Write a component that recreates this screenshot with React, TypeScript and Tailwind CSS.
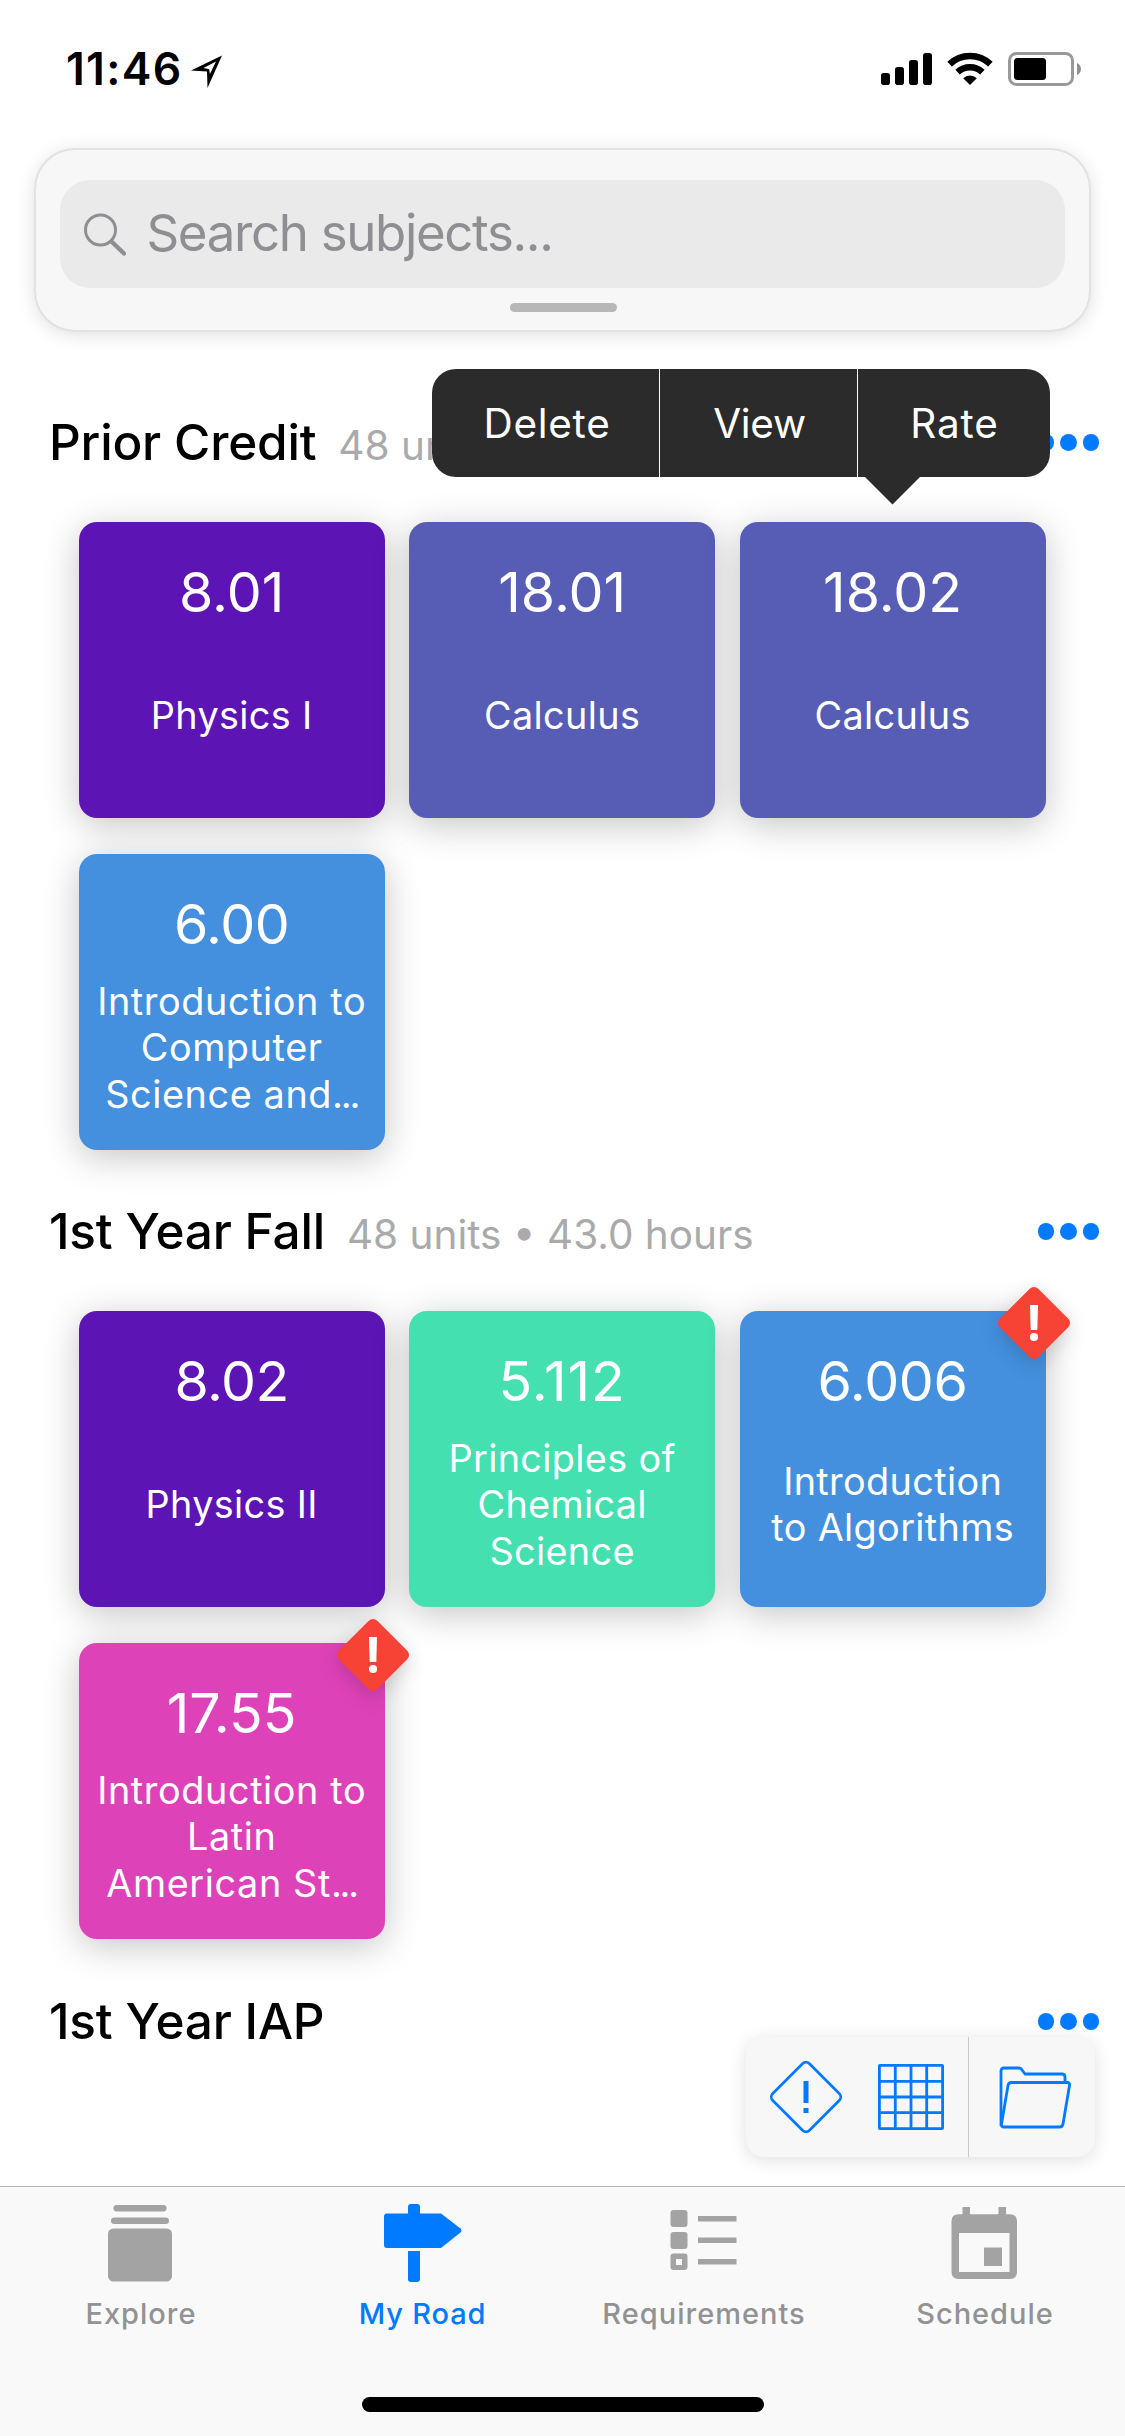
import type { ReactNode } from "react";

type Course = {
  id: string;
  lines: string[];
  truncated?: boolean;
  color: string;
  idTracking?: string;
  warning?: boolean;
};

type Semester = { name: string; info?: string; height: string; courses: Course[] };

const semesters: Semester[] = [
  {
    name: "Prior Credit",
    info: "48 units",
    height: "h-[789px]",
    courses: [
      { id: "8.01", lines: ["Physics I"], color: "bg-[#5c14b4]" },
      { id: "18.01", lines: ["Calculus"], color: "bg-[#575db4]" },
      { id: "18.02", lines: ["Calculus"], color: "bg-[#575db4]" },
      {
        id: "6.00",
        lines: ["Introduction to", "Computer", "Science and"],
        truncated: true,
        color: "bg-[#4490de]",
        idTracking: "tracking-[-0.5px]",
      },
    ],
  },
  {
    name: "1st Year Fall",
    info: "48 units • 43.0 hours",
    height: "h-[790px]",
    courses: [
      { id: "8.02", lines: ["Physics II"], color: "bg-[#5c14b4]", idTracking: "tracking-[-0.5px]" },
      {
        id: "5.112",
        lines: ["Principles of", "Chemical", "Science"],
        color: "bg-[#44e0b0]",
        idTracking: "tracking-[1px]",
      },
      {
        id: "6.006",
        lines: ["Introduction", "to Algorithms"],
        color: "bg-[#4490de]",
        idTracking: "tracking-[-0.3px]",
        warning: true,
      },
      {
        id: "17.55",
        lines: ["Introduction to", "Latin", "American St"],
        truncated: true,
        color: "bg-[#de42b8]",
        warning: true,
      },
    ],
  },
  { name: "1st Year IAP", height: "h-[789px]", courses: [] },
];

function StatusBar() {
  return (
    <div className="flex h-[150px] shrink-0 items-start justify-between pt-[49px] pr-[44px] pl-[66px]">
      <div className="flex items-start">
        <span className="text-[44.5px] leading-[40px] font-semibold tracking-[1.3px]">11:46</span>
        <svg className="mt-[6px] ml-[9px]" width="33" height="34" viewBox="0 0 33 34">
          <path
            d="M31 0.5 L0 15.5 L16 16.5 L16.5 33 Z M25 6.5 L18.9 19 L18.2 14.2 L12.5 13 Z"
            fill="#000"
            fillRule="evenodd"
          />
        </svg>
      </div>
      <div className="flex items-start pt-[3px]">
        <svg width="51" height="34" viewBox="0 0 51 34">
          <rect x="0" y="21" width="9" height="12" rx="2.8" />
          <rect x="14" y="15" width="9" height="18" rx="2.8" />
          <rect x="28" y="8" width="9" height="25" rx="2.8" />
          <rect x="42" y="1" width="9" height="32" rx="2.8" />
        </svg>
        <svg className="ml-[15px]" width="46" height="34" viewBox="0 0 46 34">
          <g fill="none" stroke="#000" strokeWidth="6.6">
            <path d="M2.6 12.2 A29.5 29.5 0 0 1 43.4 12.2" />
            <path d="M10.6 20.2 A18.2 18.2 0 0 1 35.4 20.2" />
          </g>
          <path d="M23 33 L16.2 26.2 A9.6 9.6 0 0 1 29.8 26.2 Z" />
        </svg>
        <svg className="ml-[15px]" width="73" height="34" viewBox="0 0 73 34">
          <rect x="1.5" y="1.5" width="63" height="31" rx="7" fill="none" stroke="#999" strokeWidth="3" />
          <rect x="6" y="6" width="32" height="22" rx="3.5" />
          <path d="M69 11 C74.3 13 74.3 21 69 23 Z" fill="#8f8f8f" />
        </svg>
      </div>
    </div>
  );
}

function SearchPanel() {
  return (
    <div className="mx-9 flex h-[180px] shrink-0 flex-col items-center rounded-[39px] bg-[#f7f7f7] px-6 pt-[30px] shadow-[0_0_0_2px_#e2e2e2,0_3px_20px_rgba(0,0,0,0.15)]">
      <div className="flex h-[108px] w-full items-center rounded-[30px] bg-[#eaeaea] pl-6">
        <svg width="42" height="43" viewBox="0 0 42 43" fill="none" stroke="#8e8e93" strokeLinecap="round">
          <circle cx="16.5" cy="17" r="15" strokeWidth="3" />
          <path d="M28 29 L40 40.5" strokeWidth="4.5" />
        </svg>
        <span className="mb-[3px] ml-[20.5px] text-[51px] leading-[60px] tracking-[-1.35px] text-[#8e8e93]">
          Search subjects...
        </span>
      </div>
      <div className="mt-[15px] ml-px h-[9px] w-[107px] rounded-full bg-[#b7b7b7]" />
    </div>
  );
}

function WarningBadge() {
  return (
    <svg
      className="absolute -top-[24px] -right-[24px] overflow-visible drop-shadow-[0_6px_10px_rgba(0,0,0,0.16)]"
      width="72"
      height="72"
      viewBox="0 0 72 72"
    >
      <rect x="8.75" y="8.75" width="54.5" height="54.5" rx="6" fill="#f74336" transform="rotate(45 36 36)" />
      <path d="M32 18 H40 L39.3 43 H32.7 Z" fill="#fff" />
      <circle cx="36" cy="50" r="4.1" fill="#fff" />
    </svg>
  );
}

function CourseCard({ course }: { course: Course }) {
  return (
    <div
      className={`relative flex h-[295.67px] flex-col items-center rounded-[18px] pt-10 pb-[9px] text-white shadow-[0_7px_36px_rgba(0,0,0,0.23)] ${course.color}`}
    >
      <div className={`text-[55.5px] leading-[60px] ${course.idTracking ?? ""}`}>{course.id}</div>
      <div
        className={`flex flex-1 flex-col justify-center text-center text-[37.8px] leading-[46.5px] whitespace-nowrap ${course.truncated ? "tracking-[0.6px]" : "tracking-[0.35px]"}`}
      >
        {course.lines.map((line, i) => (
          <div key={line}>
            {line}
            {course.truncated && i === course.lines.length - 1 && (
              <span className="tracking-[-2.2px]">...</span>
            )}
          </div>
        ))}
      </div>
      {course.warning && <WarningBadge />}
    </div>
  );
}

function MoreDots() {
  return (
    <div className="mt-[32px] flex gap-[6px]">
      <span className="size-[16.5px] rounded-full bg-[#007aff]" />
      <span className="size-[16.5px] rounded-full bg-[#007aff]" />
      <span className="size-[16.5px] rounded-full bg-[#007aff]" />
    </div>
  );
}

function SemesterSection({ semester, children }: { semester: Semester; children?: ReactNode }) {
  return (
    <section className={`relative shrink-0 ${semester.height}`}>
      <header className="flex h-[120px] items-start justify-between pr-[26px] pl-[49px]">
        <div className="flex items-baseline gap-[22px] pt-[10px]">
          <h2 className="text-[49.5px] leading-[60px] font-medium tracking-[-0.2px]">{semester.name}</h2>
          {semester.info && <span className="text-[40.5px] leading-[50px] text-[#aaa]">{semester.info}</span>}
        </div>
        <MoreDots />
      </header>
      <div className="ml-[78.67px] grid w-[967px] grid-cols-3 gap-x-[24.5px] gap-y-[36.33px]">
        {semester.courses.map((course) => (
          <CourseCard key={course.id} course={course} />
        ))}
      </div>
      {children}
    </section>
  );
}

function ContextMenu() {
  return (
    <div className="absolute top-[-33px] left-[432px] w-[618px]">
      <div className="flex h-[108px] items-center overflow-hidden rounded-[24px] bg-[#2b2b2b] text-[40.5px] text-white">
        <div className="flex h-full w-[228px] items-center justify-center border-r border-white pt-[2px] pl-[3px] tracking-[0.7px]">
          Delete
        </div>
        <div className="flex h-full w-[198px] items-center justify-center border-r border-white pt-[2px] pl-[2px] tracking-[-0.3px]">
          View
        </div>
        <div className="flex h-full flex-1 items-center justify-center pt-[2px] pl-[1px] tracking-[0.9px]">Rate</div>
      </div>
      <svg className="ml-[433px]" width="55" height="28" viewBox="0 0 55 28">
        <path d="M0 0 H55 L27.5 27.5 Z" fill="#2b2b2b" />
      </svg>
    </div>
  );
}

function FloatingToolbar() {
  return (
    <div className="absolute top-[2037px] left-[746px] flex h-[120px] w-[349px] rounded-[18px] bg-[#f7f7f7] shadow-[0_3px_18px_rgba(0,0,0,0.13)]">
      <div className="flex w-[223px] items-center border-r border-[#c8c8c8] pl-[24px]">
        <svg width="72" height="72" viewBox="0 0 72 72">
          <rect
            x="10"
            y="10"
            width="52"
            height="52"
            rx="5"
            fill="none"
            stroke="#007aff"
            strokeWidth="2.7"
            transform="rotate(45 36 36)"
          />
          <rect x="33.5" y="20" width="5" height="22" fill="#007aff" />
          <rect x="33.5" y="47" width="5" height="5" fill="#007aff" />
        </svg>
        <svg className="ml-[36px]" width="66" height="66" viewBox="0 0 66 66" fill="none" stroke="#007aff">
          <rect x="1.4" y="1.4" width="63.2" height="63.2" rx="0.5" strokeWidth="2.8" />
          <path
            d="M17.3 1 V65 M33 1 V65 M48.7 1 V65 M1 17.3 H65 M1 33 H65 M1 48.7 H65"
            strokeWidth="2.8"
          />
        </svg>
      </div>
      <div className="flex flex-1 items-center pt-[1px] pl-[29px]">
        <svg
          width="74"
          height="64"
          viewBox="0 0 74 64"
          fill="none"
          stroke="#007aff"
          strokeWidth="2.8"
          strokeLinejoin="round"
        >
          <path d="M3 60 V5 Q3 2 6 2 H21 Q23 2 24 4 L27 8 H64 Q67 8 67 11 V16" />
          <path d="M13.5 16.5 H69 Q72 16.5 71.5 19.5 L65 58 Q64.5 61 61.5 61 H6 Q3 61 3.5 58 L10 19.5 Q10.5 16.5 13.5 16.5 Z" />
        </svg>
      </div>
    </div>
  );
}

function ExploreIcon() {
  return (
    <svg width="90" height="90" viewBox="0 0 90 90" fill="#a3a3a3">
      <rect x="17.5" y="6" width="53" height="6.5" rx="3.2" />
      <rect x="15" y="18.5" width="58" height="6.5" rx="3.2" />
      <rect x="12" y="29.5" width="64" height="53" rx="5.5" />
    </svg>
  );
}

function RoadIcon() {
  return (
    <svg width="90" height="90" viewBox="0 0 90 90" fill="#007aff">
      <path d="M31 18 V8 Q31 5 34 5 H40 Q43 5 43 8 V18 Z" />
      <path d="M10 14.5 H64 L83.5 29.5 Q85.5 31.5 83.5 33.5 L64 49 H10 Q7 49 7 46 V17.5 Q7 14.5 10 14.5 Z" />
      <path d="M31 52 H43 V80 Q43 83 40 83 H34 Q31 83 31 80 Z" />
    </svg>
  );
}

function RequirementsIcon() {
  return (
    <svg width="90" height="90" viewBox="0 0 90 90" fill="#a3a3a3">
      <rect x="11.5" y="11" width="17" height="17" rx="3" />
      <rect x="11.5" y="33" width="17" height="17" rx="3" />
      <path
        d="M14.5 54.5 H25.5 Q28.5 54.5 28.5 57.5 V68 Q28.5 71 25.5 71 H14.5 Q11.5 71 11.5 68 V57.5 Q11.5 54.5 14.5 54.5 Z M17 60 V66 H23 V60 Z"
        fillRule="evenodd"
      />
      <rect x="39" y="17" width="38.5" height="5.5" />
      <rect x="39" y="38.5" width="38.5" height="5.5" />
      <rect x="39" y="60" width="38.5" height="5.5" />
    </svg>
  );
}

function ScheduleIcon() {
  return (
    <svg width="90" height="90" viewBox="0 0 90 90" fill="#a3a3a3">
      <rect x="22.5" y="8" width="7.5" height="10" />
      <rect x="58.5" y="8" width="7.5" height="10" />
      <path
        d="M18.5 15.3 H70 Q77 15.3 77 22.3 V73 Q77 80 70 80 H18.5 Q11.5 80 11.5 73 V22.3 Q11.5 15.3 18.5 15.3 Z M19 34 V73 H69.5 V34 Z"
        fillRule="evenodd"
      />
      <rect x="44" y="48.5" width="18" height="18.5" />
    </svg>
  );
}

function Tab({ icon, label, active, width }: { icon: ReactNode; label: string; active?: boolean; width: string }) {
  return (
    <div className={`flex flex-col items-center pt-[12px] ${width}`}>
      {icon}
      <span
        className={`mt-[7px] ml-px text-[29px] leading-[36px] font-medium ${active ? "tracking-[0.8px] text-[#007aff]" : "tracking-[1px] text-[#929292]"}`}
      >
        {label}
      </span>
    </div>
  );
}

function TabBar() {
  return (
    <nav className="relative flex h-[250px] shrink-0 flex-col justify-between border-t border-[#b2b2b2] bg-[#f9f9f9] pb-6">
      <div className="flex">
        <Tab icon={<ExploreIcon />} label="Explore" width="w-[281px]" />
        <Tab icon={<RoadIcon />} label="My Road" active width="w-[282px]" />
        <Tab icon={<RequirementsIcon />} label="Requirements" width="w-[281px]" />
        <Tab icon={<ScheduleIcon />} label="Schedule" width="w-[281px]" />
      </div>
      <div className="mx-auto h-[15px] w-[402px] rounded-full bg-black" />
    </nav>
  );
}

export default function App() {
  return (
    <div className="relative flex h-[2436px] w-[1125px] flex-col overflow-hidden bg-white font-['Inter',sans-serif] text-black">
      <StatusBar />
      <SearchPanel />
      <main className="flex min-h-0 flex-1 flex-col pt-[72px]">
        <SemesterSection semester={semesters[0]}>
          <ContextMenu />
        </SemesterSection>
        <SemesterSection semester={semesters[1]} />
        <SemesterSection semester={semesters[2]} />
      </main>
      <FloatingToolbar />
      <TabBar />
    </div>
  );
}
